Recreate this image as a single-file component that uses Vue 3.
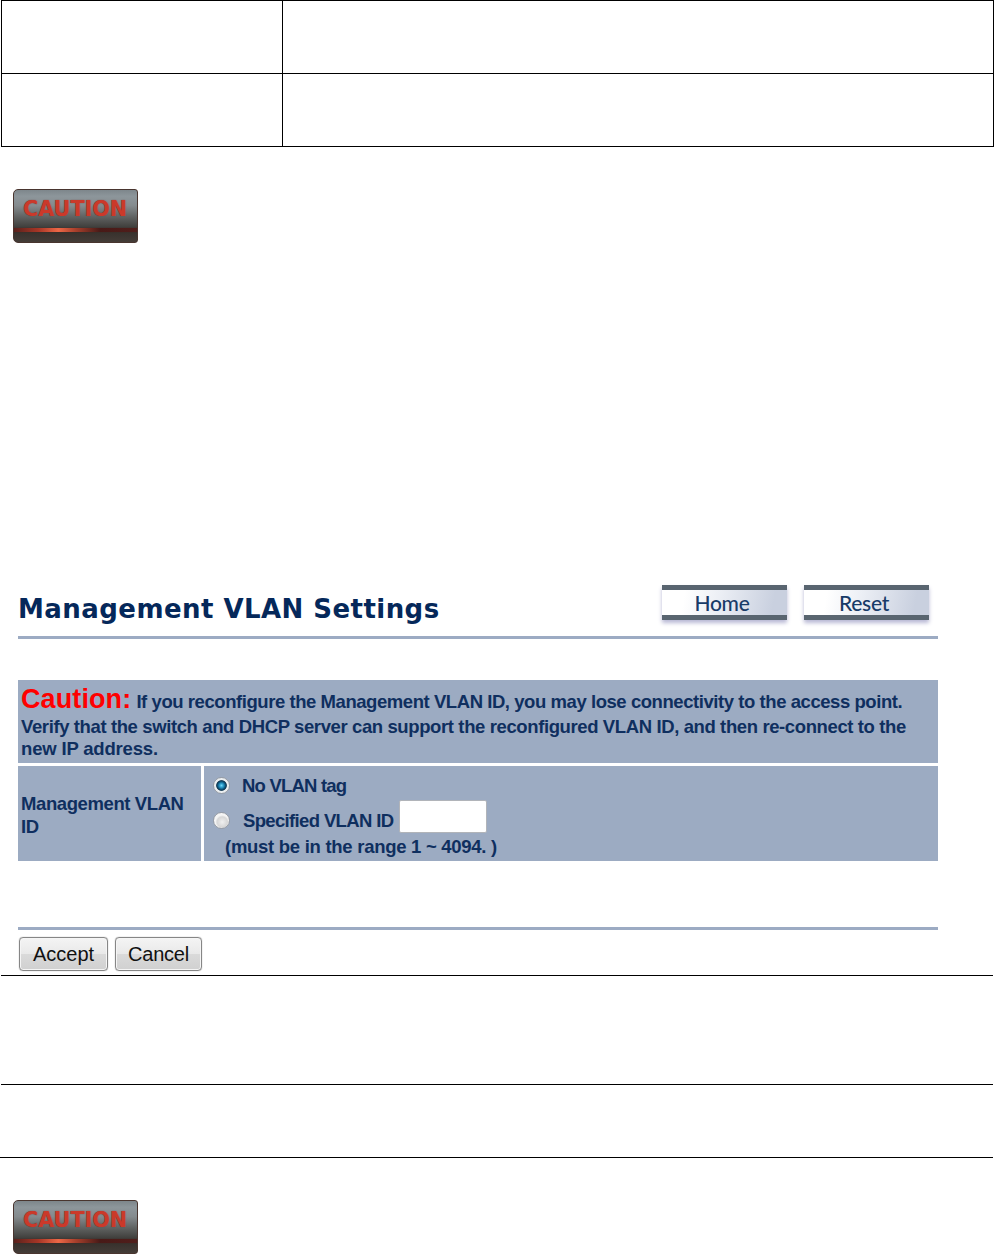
<template>
  <main class="page">
    <table class="option-table">
      <tbody>
        <tr v-for="row in 2" :key="row">
          <td class="option-name" />
          <td />
        </tr>
      </tbody>
    </table>

    <div class="caution-badge">
      <span class="badge-label">CAUTION</span>
      <span class="badge-glow" />
    </div>

    <section class="settings">
      <header class="settings-head">
        <h1>Management VLAN Settings</h1>
        <nav>
          <a v-for="link in links" :key="link">{{ link }}</a>
        </nav>
      </header>

      <div class="panel">
        <p class="warning">
          <span class="line line-first"><strong>Caution:</strong> <span class="first-text">If you reconfigure the Management VLAN ID, you may lose connectivity to the access point.</span></span>
          <span class="line line-second">Verify that the switch and DHCP server can support the reconfigured VLAN ID, and then re-connect to the</span>
          <span class="line line-third">new IP address.</span>
        </p>
        <div class="field-name">Management VLAN<br>ID</div>
        <div class="field-value">
          <label class="choice">
            <input v-model="mode" type="radio" value="none">
            <span class="no-tag">No VLAN tag</span>
          </label>
          <label class="choice choice-id">
            <input v-model="mode" type="radio" value="specified">
            <span class="specified">Specified VLAN ID</span>
            <input v-model="vlanId" class="vlan-id" type="text">
          </label>
          <p class="hint">(must be in the range 1 ~ 4094. )</p>
        </div>
      </div>

      <footer class="actions">
        <button type="button">Accept</button>
        <button type="button">Cancel</button>
      </footer>
    </section>

    <div class="rule-row rule-row-tall" />
    <div class="rule-row" />

    <div class="caution-badge badge-last">
      <span class="badge-label">CAUTION</span>
      <span class="badge-glow" />
    </div>
  </main>
</template>

<script setup>
import { ref } from 'vue'

const links = ['Home', 'Reset']
const mode = ref('none')
const vlanId = ref('')
</script>

<style>
body {
  margin: 0;
  background: #fff;
}
</style>

<style scoped>
* {
  box-sizing: border-box;
}

.page {
  width: 994px;
  height: 1254px;
  overflow: hidden;
  font-family: "Liberation Sans", Arial, sans-serif;
  color: #0f2f5f;
}

.option-table {
  display: grid;
  width: 993px;
  margin-left: 1px;
  border-top: 1px solid #000;
  border-left: 1px solid #000;
}

.option-table tbody {
  display: grid;
}

.option-table tr {
  display: grid;
  grid-template-columns: 281px 1fr;
  height: 73px;
}

.option-table td {
  padding: 0;
  border-right: 1px solid #000;
  border-bottom: 1px solid #000;
}

/* Badge */
.caution-badge {
  display: flex;
  flex-direction: column;
  width: 125px;
  height: 54px;
  margin: 42px 0 0 13px;
  border: 1px solid #49352f;
  border-radius: 5px 3px 3px 5px;
  background: linear-gradient(#7d868b 0, #8d969b 12%, #858b8e 30%, #5c5e5d 54%, #3d3c39 73%, #352f2b 78%, #443c37 100%);
}

.badge-label {
  height: 38px;
  padding-left: 9px;
  font: bold 20.5px/38px "DejaVu Sans", Verdana, sans-serif;
  letter-spacing: 0.15px;
  color: #cb392a;
  text-shadow: 0 0 1px #742d27;
  white-space: nowrap;
}

.badge-glow {
  height: 4px;
  background: linear-gradient(90deg, #59211c, #a83626 20%, #ed6746 36%, #a9402c 50%, #481a17 70%, #501e1b);
  box-shadow: 0 0 1px #571e18;
}

/* Settings */
.settings {
  height: 390px;
  margin: 342px 0 0 18px;
}

.settings-head {
  display: flex;
  justify-content: space-between;
  width: 920px;
  height: 54px;
  border-bottom: 3px solid #9cabc3;
}

h1 {
  margin: 6px 0 0;
  font: bold 26px/36px "DejaVu Sans", Verdana, sans-serif;
  letter-spacing: 0.45px;
  color: #05285a;
  white-space: nowrap;
}

nav {
  display: flex;
  gap: 17px;
  padding-right: 9px;
}

nav a {
  width: 125px;
  height: 35px;
  border: solid #596570;
  border-width: 5px 0;
  padding-right: 5px;
  background: linear-gradient(100deg, #fff 18%, #eceff5 45%, #c9d0df 88%);
  box-shadow: 0 3px 4px #b9b9d5;
  font: 500 21px/25px Lato, "Open Sans", sans-serif;
  letter-spacing: -0.3px;
  color: #183b68;
  text-align: center;
}

.panel {
  display: grid;
  grid-template-columns: 183px 734px;
  grid-template-rows: 83px 95px;
  gap: 3px;
  width: 920px;
  margin-top: 41px;
  font-size: 18.5px;
  font-weight: bold;
  line-height: 23px;
}

.warning,
.field-name,
.field-value {
  margin: 0;
  background: #9cabc2;
}

.warning {
  grid-column: 1 / -1;
  padding: 3px 3px 0;
}

.line {
  display: block;
  height: 23px;
  line-height: 23px;
  white-space: nowrap;
}

.line-first {
  height: 32px;
  line-height: 32px;
}

.first-text {
  letter-spacing: -0.44px;
}

.line-second {
  height: 22px;
  letter-spacing: -0.388px;
}

.line-third {
  letter-spacing: -0.17px;
}

.warning strong {
  font-size: 27px;
  letter-spacing: 0.1px;
  color: #f00;
}

.field-name {
  padding: 26px 3px 0;
  letter-spacing: -0.4px;
}

.field-value {
  padding: 8px 10px 0;
}

.choice {
  display: flex;
  align-items: center;
  height: 23px;
}

.choice-id {
  height: 36px;
  margin-top: 5px;
}

.choice input[type="radio"] {
  appearance: none;
  width: 17px;
  height: 17px;
  margin: 0 0 0 -1px;
  border: 1px solid #969ca5;
  border-radius: 50%;
  background: radial-gradient(circle at 55% 60%, #f0f0f0 0, #d7d7d7 42%, #f5f5f5 56%);
}

.choice input[type="radio"]:checked {
  background: radial-gradient(circle, #6fd5f5 0, #2b9cca 18%, #0f5d86 34%, #0b324c 46%, #e9edf0 54%, #f4f4f4);
}

.no-tag {
  margin-left: 12px;
  letter-spacing: -0.8px;
}

.specified {
  margin-left: 13px;
  letter-spacing: -0.65px;
}

.choice .vlan-id {
  width: 88px;
  height: 33px;
  margin: -7px 0 0 6px;
  border: 1px solid #b1b4b9;
  border-radius: 2px;
  background: #fff;
}

.hint {
  margin: -3px 0 0 11px;
  letter-spacing: -0.28px;
}

/* Buttons */
.actions {
  display: flex;
  gap: 7px;
  width: 920px;
  margin-top: 66px;
  padding: 7px 1px 0;
  border-top: 3px solid #9cabc3;
}

.actions button {
  width: 89px;
  height: 34px;
  padding: 0;
  border: 1.5px solid #868686;
  border-radius: 4px;
  background: linear-gradient(#f4f4f4 0, #e9e9e9 49%, #dadada 51%, #d0d0d0);
  box-shadow: inset 0 0 0 1px #f5f5f5, 0 0 1px #868686;
  font: 20px/29px "Liberation Sans", Arial, sans-serif;
  color: #111;
}

.actions button:last-child {
  width: 87px;
  letter-spacing: -0.2px;
}

.rule-row {
  height: 73px;
  margin-right: 1px;
  border-bottom: 1px solid #000;
}

.rule-row-tall {
  height: 110px;
  margin-left: 1px;
  border-top: 1px solid #000;
}
</style>
